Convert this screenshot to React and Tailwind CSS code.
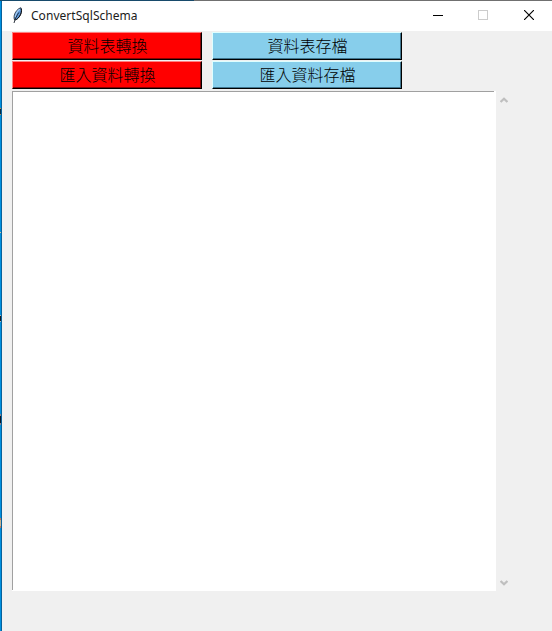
import React from 'react';

const BUTTON_ROWS = [
  ['資料表轉換', '資料表存檔'],
  ['匯入資料轉換', '匯入資料存檔'],
];

const RED = 'bg-[#ff0000] border-t-[#ff7f7f] border-l-[#ff7f7f] shadow-[inset_-1px_-1px_0_#8b0000]';
const BLUE = 'bg-[#87ceeb] border-t-[#dfffff] border-l-[#dfffff] shadow-[inset_-1px_-1px_0_#3f7690]';

function Feather() {
  return (
    <svg width="12" height="18" viewBox="0 0 12 18" className="mt-[6px] ml-[10px] shrink-0">
      <path d="M8.800 .7C6 1.500 3 5 2.300 8.300c-.4 1.900-.3 3.500 .3 4.700C5 12.600 7.500 10 8.700 7 9.600 4.700 9.600 2.300 8.800 .7Z" fill="#5c97da" stroke="#2b3541" strokeWidth=".9" />
      <path d="M7.800 2.300C5.500 4 3.700 7 3.200 10" stroke="#a9cdf3" strokeWidth="1.100" fill="none" />
      <path d="M9.200 1.500C10 4 9.300 7 7.300 9.800 6.300 11.300 4.800 12.500 3.500 13" stroke="#0b0f14" strokeWidth="1" fill="none" />
      <path d="M6.800 5.500C4.800 8.500 3 12 2 16" stroke="#18202b" strokeWidth=".9" fill="none" />
    </svg>
  );
}

function TitleBar() {
  return (
    <header className="flex h-[30px] bg-white">
      <Feather />
      <h1 className="ml-[7px] w-[108px] whitespace-nowrap font-['Noto_Sans','Open_Sans',sans-serif] text-[12px] leading-[30px] tracking-[0.04px] text-[#1c1c1c]">
        ConvertSqlSchema
      </h1>
      <div className="ml-auto flex">
        <button className="flex h-[30px] w-[46px] items-start justify-center pt-[9px]" aria-label="Minimize">
          <svg width="10" height="11" shapeRendering="crispEdges"><path d="M0 5.500H10" stroke="#000" /></svg>
        </button>
        <button className="flex h-[30px] w-[45px] items-start justify-center pt-[9px] pr-px" aria-label="Maximize">
          <svg width="10" height="10" shapeRendering="crispEdges"><path d="M.5.5h9v9h-9z" stroke="#ccc" fill="none" /></svg>
        </button>
        <button className="flex h-[30px] w-[46px] items-start justify-center pt-[9px]" aria-label="Close">
          <svg width="10" height="10"><path d="M0 0 10 10M10 0 0 10" stroke="#000" strokeWidth="1.150" /></svg>
        </button>
      </div>
    </header>
  );
}

function ActionButton({ label, tone }) {
  return (
    <button
      className={`flex h-[28px] w-[190px] items-center justify-center border border-r-black border-b-black pb-px pl-px font-['Noto_Sans_CJK_TC',sans-serif] text-[16px] leading-[23px] font-light text-black ${tone}`}
    >
      {label}
    </button>
  );
}

function Chevron({ down }) {
  return (
    <svg width="8" height="6" viewBox="0 0 8 6" className={down ? 'rotate-180' : ''}>
      <path d="M.6 5 4 1.700 7.400 5" fill="none" stroke="#bfbfbf" strokeWidth="2.200" />
    </svg>
  );
}

export default function App() {
  return (
    <div className="flex h-[631px] w-[552px] flex-col overflow-hidden bg-[#f0f0f0]">
      <div className="flex h-px shrink-0">
        <div className="w-[194px] bg-[#174a6b]" />
        <div className="flex-1 bg-[#707070]" />
      </div>
      <div className="flex flex-1">
        <div className="flex w-[2px] flex-col border-r border-[#07619b] bg-[#0090e0]">
          <div className="mt-[107px] h-[7px] border-y border-[#c18b49] bg-[#062b45]" />
          <div className="mt-[117px] h-px bg-[#d8c59b]" />
          <div className="mt-[82px] h-[7px] border-y border-[#a8b6bc] bg-[#101a25]" />
          <div className="mt-[92px] h-[11px] border-y-2 border-[#8b8390] bg-[#0b1726]" />
          <div className="mt-[93px] h-[10px] border-y-2 border-[#b87963] bg-[#c9b18e]" />
        </div>
        <div className="flex flex-1 flex-col">
          <TitleBar />
          <main className="flex flex-1 flex-col pt-px pl-[10px]">
            <div className="grid w-fit grid-cols-2 gap-x-[10px] gap-y-px">
              {BUTTON_ROWS.flat().map((label, i) => (
                <ActionButton key={label} label={label} tone={i % 2 === 0 ? RED : BLUE} />
              ))}
            </div>
            <div className="mt-[2px] flex h-[500px]">
              <div className="flex w-[484px] flex-col bg-white">
                <textarea
                  className="block h-[499px] w-[482px] resize-none border-t border-l border-[#a0a0a0] bg-white outline-none"
                  aria-label="Output"
                />
              </div>
              <div className="flex w-[16px] flex-col items-center justify-between pt-[6px] pb-[5px]">
                <Chevron />
                <Chevron down />
              </div>
            </div>
          </main>
        </div>
      </div>
    </div>
  );
}
